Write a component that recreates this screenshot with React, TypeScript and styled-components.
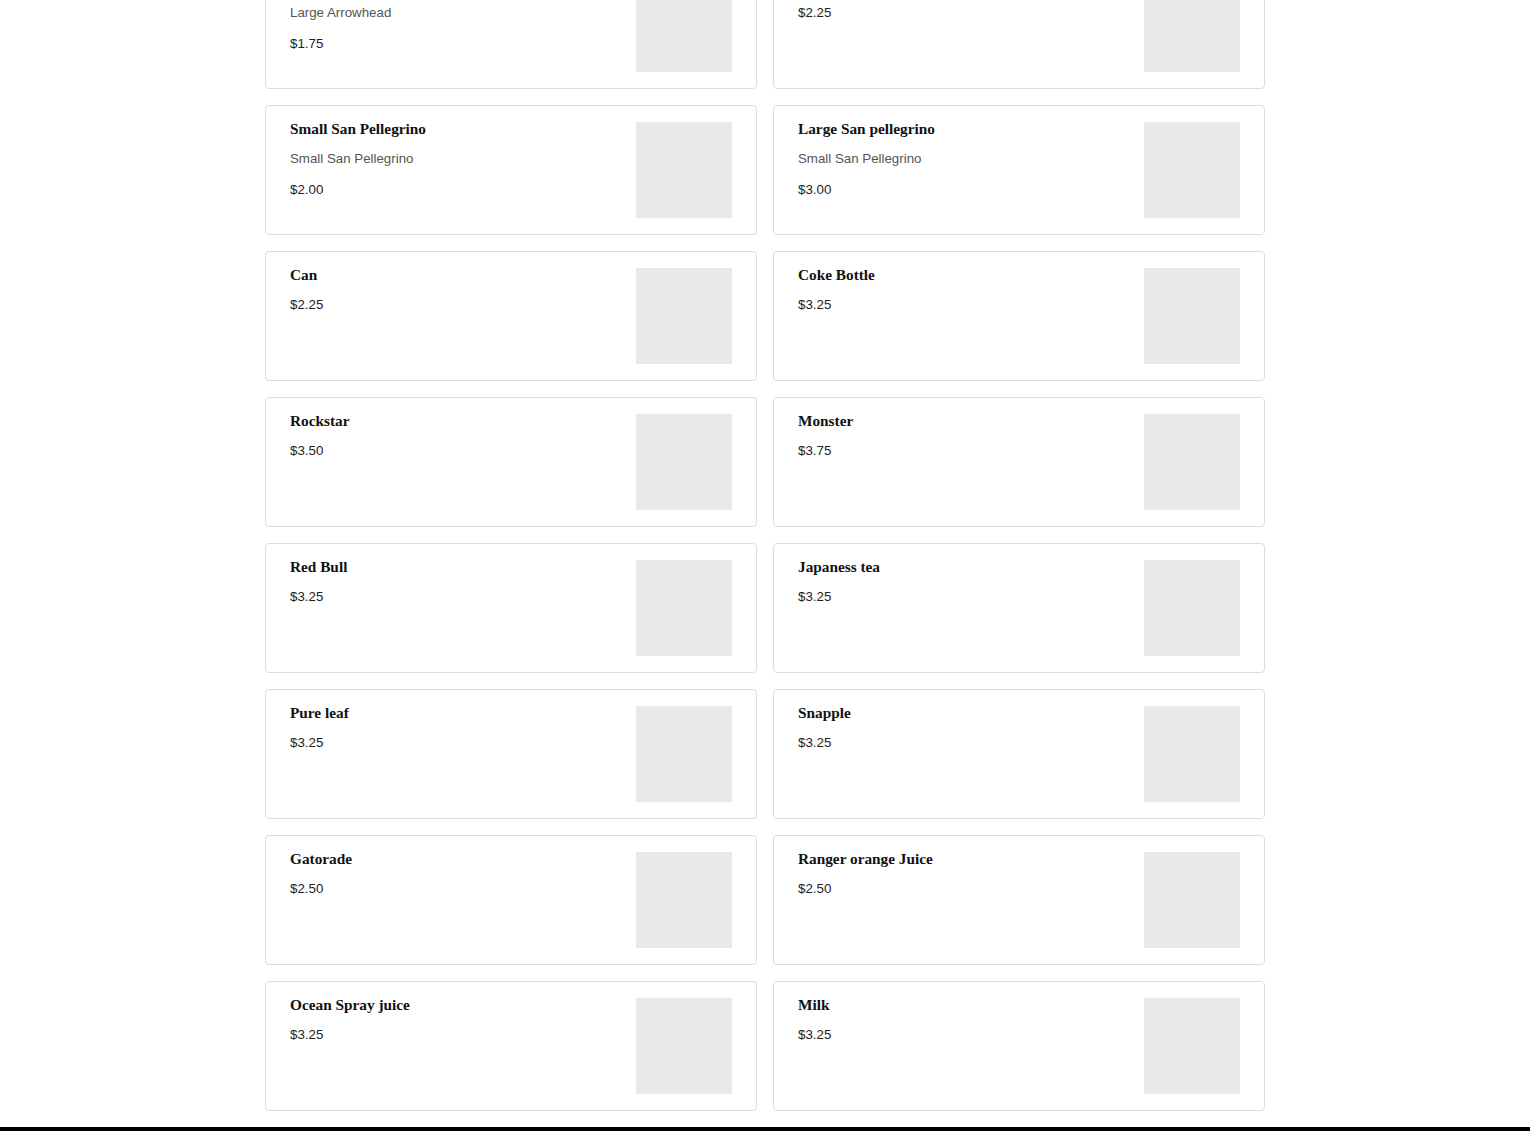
import React from 'react'
import styled, { createGlobalStyle } from 'styled-components'

const GlobalStyle = createGlobalStyle`
  html, body {
    margin: 0;
    padding: 0;
    background: #fff;
    overflow: hidden;
  }
  body {
    font-family: "Liberation Sans", Arial, sans-serif;
  }
`

const Page = styled.div`
  display: flex;
  flex-direction: column;
  min-height: 100vh;
`

// the view is scrolled: the first row sits partly above the window
const Grid = styled.div`
  width: 1000px;
  margin: -41px auto 0;
  display: grid;
  grid-template-columns: 1fr 1fr;
  gap: 16px;
`

const Card = styled.div`
  display: flex;
  justify-content: space-between;
  align-items: flex-start;
  height: 130px;
  box-sizing: border-box;
  padding: 16px 24px;
  border: 1px solid #dcdcdc;
  border-radius: 4px;
  background: #fff;
`

const Info = styled.div`
  display: flex;
  flex-direction: column;
`

const Title = styled.div`
  font-family: "Liberation Serif", "Times New Roman", serif;
  font-weight: 700;
  font-size: 15.3px;
  line-height: 14px;
  color: #111;
`

const Description = styled.div`
  margin-top: 15px;
  font-size: 13.3px;
  line-height: 16px;
  color: #555;
`

const Price = styled.div`
  margin-top: 15px;
  font-size: 13.3px;
  line-height: 16px;
  color: #222;
`

const Thumb = styled.div`
  width: 96px;
  height: 96px;
  flex-shrink: 0;
  background: #e9e9e9;
`

const Footer = styled.div`
  margin-top: 16px;
  height: 60px;
  background: #000;
`

type Item = { name: string; description?: string; price: string }

const items: Item[] = [
  { name: 'Large Arrowhead', description: 'Large Arrowhead', price: '$1.75' },
  { name: 'Vitamin Water', price: '$2.25' },
  { name: 'Small San Pellegrino', description: 'Small San Pellegrino', price: '$2.00' },
  { name: 'Large San pellegrino', description: 'Small San Pellegrino', price: '$3.00' },
  { name: 'Can', price: '$2.25' },
  { name: 'Coke Bottle', price: '$3.25' },
  { name: 'Rockstar', price: '$3.50' },
  { name: 'Monster', price: '$3.75' },
  { name: 'Red Bull', price: '$3.25' },
  { name: 'Japaness tea', price: '$3.25' },
  { name: 'Pure leaf', price: '$3.25' },
  { name: 'Snapple', price: '$3.25' },
  { name: 'Gatorade', price: '$2.50' },
  { name: 'Ranger orange Juice', price: '$2.50' },
  { name: 'Ocean Spray juice', price: '$3.25' },
  { name: 'Milk', price: '$3.25' },
]

const App = () => (
  <Page>
    <GlobalStyle />
    <Grid>
      {items.map((item) => (
        <Card key={item.name}>
          <Info>
            <Title>{item.name}</Title>
            {item.description && <Description>{item.description}</Description>}
            <Price>{item.price}</Price>
          </Info>
          <Thumb />
        </Card>
      ))}
    </Grid>
    <Footer />
  </Page>
)

export default App
